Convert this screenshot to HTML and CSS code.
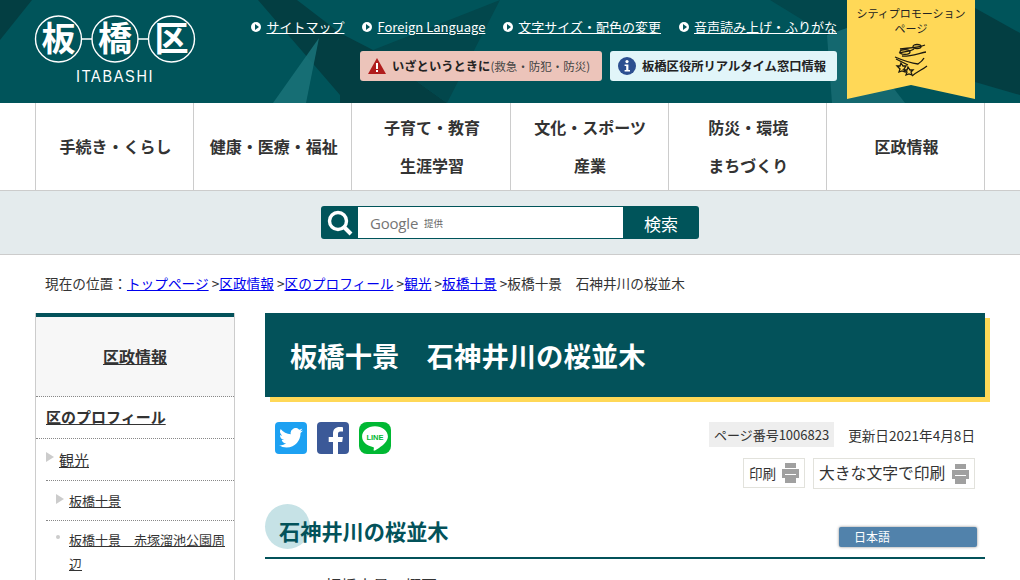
FILE: index.html
```html
<!DOCTYPE html>
<html lang="ja">
<head>
  <meta charset="UTF-8">
  <title>板橋十景 石神井川の桜並木</title>
  <link rel="stylesheet" href="styles.css">
</head>
<body>
  <!-- Header -->
  <header class="header">
    <svg class="header-bg" viewBox="0 0 1020 103" preserveAspectRatio="none" aria-hidden="true">
      <polygon points="0,0 32,0 0,40" fill="#033e42"/>
      <polygon points="258,0 297,0 340,33 373,50 447,103 340,103 340,95" fill="#033e42"/>
      <polygon points="373,50 500,0 447,103" fill="#02474c"/>
      <polygon points="319,38 306,103 273,103" fill="#1a7379" opacity="0.85"/>
      <polygon points="770,0 847,0 847,30 827,35" fill="#02474c"/>
      <polygon points="827,35 847,28 905,103 832,103" fill="#14686f"/>
      <polygon points="975,8 1020,33 1020,95 975,82" fill="#033e42"/>
    </svg>
    <a class="logo" href="#">
      <svg class="logo-marks" viewBox="0 0 160 48" aria-hidden="true">
        <circle cx="23.500" cy="24" r="23" fill="none" stroke="#fff" stroke-width="1.400"/>
        <circle cx="80" cy="24" r="23" fill="none" stroke="#fff" stroke-width="1.400"/>
        <circle cx="136.500" cy="24" r="23" fill="none" stroke="#fff" stroke-width="1.400"/>
        <path d="M46.500 24H57M103 24H113.500" stroke="#fff" stroke-width="1.400"/>
        <text x="23.500" y="36" class="logo-kanji">板</text>
        <text x="80" y="36" class="logo-kanji">橋</text>
        <text x="136.500" y="36" class="logo-kanji">区</text>
      </svg>
      <span class="logo-name">ITABASHI</span>
    </a>
    <div class="header-tools">
      <ul class="tool-links">
        <li><a href="#">サイトマップ</a></li>
        <li><a href="#">Foreign Language</a></li>
        <li><a href="#">文字サイズ・配色の変更</a></li>
        <li><a href="#">音声読み上げ・ふりがな</a></li>
      </ul>
      <div class="tool-buttons">
        <a class="btn-emergency" href="#">
          <svg width="18" height="16" viewBox="0 0 18 16" aria-hidden="true">
            <polygon points="9,0 18,16 0,16" fill="#b01c1c"/>
            <rect x="8" y="5" width="2" height="6" fill="#fff"/>
            <rect x="8" y="12" width="2" height="2" fill="#fff"/>
          </svg>
          <b>いざというときに</b><small>(救急・防犯・防災)</small>
        </a>
        <a class="btn-info" href="#">
          <svg width="18" height="18" viewBox="0 0 18 18" aria-hidden="true">
            <circle cx="9" cy="9" r="9" fill="#2c4f90"/>
            <circle cx="9" cy="4.600" r="1.600" fill="#fff"/>
            <path d="M6.600 7.400H10.400V13H12V14.600H6.600V13H8.200V9H6.600Z" fill="#fff"/>
          </svg>
          <b>板橋区役所リアルタイム窓口情報</b>
        </a>
      </div>
    </div>
    <a class="promo" href="#">
      <span>シティプロモーション<br>ページ</span>
      <svg width="34" height="34" viewBox="0 0 34 34" fill="none" stroke="#1d1a10" stroke-width="1.300" aria-hidden="true">
        <path d="M6 6C12 5 24 5 31 2M5 10C10 8 16 9 20 6M8 13C14 14 26 10 32 9"/>
        <ellipse cx="11" cy="9" rx="5" ry="2.400"/>
        <ellipse cx="23" cy="3.500" rx="4" ry="2"/>
        <path d="M1 14C8 17 16 20 24 21C27 19 29 17 30 15M18 33C24 28 28 27 33 23M2 16L14 22"/>
        <polygon points="7,20 9,23 12,23 10,26 11,29 8,28 5,29 6,26 3,23 6,23"/>
        <polygon points="14,24 16,27 19,27 17,29 18,32 15,31 12,32 13,29 10,27 13,27"/>
      </svg>
    </a>
  </header>

  <!-- Global nav -->
  <nav class="gnav">
    <a href="#">手続き・くらし</a>
    <a href="#">健康・医療・福祉</a>
    <a href="#">子育て・教育<br>生涯学習</a>
    <a href="#">文化・スポーツ<br>産業</a>
    <a href="#">防災・環境<br>まちづくり</a>
    <a href="#">区政情報</a>
  </nav>

  <!-- Search -->
  <div class="search-band">
    <form class="search">
      <span class="search-icon">
        <svg width="26" height="26" viewBox="0 0 26 26" fill="none" stroke="#fff" aria-hidden="true">
          <circle cx="11" cy="11" r="8.500" stroke-width="3.400"/>
          <path d="M17 17L24 24" stroke-width="4"/>
        </svg>
      </span>
      <span class="search-input"><span class="g-word">Google</span><span class="g-note">提供</span></span>
      <button type="button">検索</button>
    </form>
  </div>

  <!-- Breadcrumb -->
  <p class="crumbs">現在の位置：<a href="#">トップページ</a> &gt;<a href="#">区政情報</a> &gt;<a href="#">区のプロフィール</a> &gt;<a href="#">観光</a> &gt;<a href="#">板橋十景</a> &gt;板橋十景　石神井川の桜並木</p>

  <div class="wrap">
    <!-- Side menu -->
    <aside class="side">
      <h2 class="side-title"><a href="#">区政情報</a></h2>
      <h3 class="side-sub"><a href="#">区のプロフィール</a></h3>
      <ul class="side-list">
        <li class="lv1"><a href="#">観光</a></li>
        <li class="lv2"><a href="#">板橋十景</a></li>
        <li class="lv3"><a href="#">板橋十景　赤塚溜池公園周辺</a></li>
      </ul>
    </aside>

    <main class="main">
      <h1 class="page-title">板橋十景　石神井川の桜並木</h1>

      <div class="meta">
        <div class="sns">
          <a class="sns-btn tw" href="#">
            <svg width="24" height="20" viewBox="0 0 24 20" aria-hidden="true">
              <path d="M24 2.400a9.700 9.700 0 0 1-2.800.8A4.900 4.900 0 0 0 23.300.5a9.800 9.800 0 0 1-3.100 1.200A4.900 4.900 0 0 0 11.800 6.200 13.900 13.900 0 0 1 1.700.9a4.900 4.900 0 0 0 1.500 6.600A4.900 4.900 0 0 1 1 6.900v.1a4.900 4.900 0 0 0 3.900 4.800 4.900 4.900 0 0 1-2.200.1 4.900 4.900 0 0 0 4.600 3.400A9.900 9.900 0 0 1 0 17.300 13.900 13.900 0 0 0 7.500 19.500c9.100 0 14-7.500 14-14v-.6A10 10 0 0 0 24 2.400Z" fill="#fff"/>
            </svg>
          </a>
          <a class="sns-btn fb" href="#">
            <svg width="32" height="32" viewBox="0 0 32 32" aria-hidden="true">
              <path d="M21 32V20h4.200l.7-5H21v-3c0-1.500.6-2.400 2.500-2.400H26V5.200C25.400 5.100 24 5 22.500 5 18.600 5 16 7.300 16 11.500V15h-4.300v5H16v12Z" fill="#fff"/>
            </svg>
          </a>
          <a class="sns-btn ln" href="#">
            <svg width="28" height="28" viewBox="0 0 26 26" aria-hidden="true">
              <path d="M13 2C6.400 2 1 6.300 1 11.700c0 4.800 4.200 8.800 9.900 9.600.4.100.9.300 1 .6.100.3.100.8 0 1.100l-.2 1c0 .3-.2 1.200 1.100.7 1.300-.5 6.900-4.100 9.400-7 1.700-1.900 2.800-3.800 2.800-6C25 6.300 19.600 2 13 2Z" fill="#fff"/>
              <text x="13" y="14.500" class="line-word">LINE</text>
            </svg>
          </a>
        </div>
        <div class="page-info">
          <div class="page-ids">
            <span class="page-no">ページ番号1006823</span>
            <span class="page-date">更新日2021年4月8日</span>
          </div>
          <div class="print-btns">
            <a class="print small" href="#">印刷
              <svg width="17" height="20" viewBox="0 0 17 20" aria-hidden="true">
                <path d="M3 0H14V5H3ZM0 6H17V15H14V11H3V15H0ZM3 12H14V20H3Z" fill="#a0a0a0"/>
              </svg>
            </a>
            <a class="print large" href="#">大きな文字で印刷
              <svg width="17" height="20" viewBox="0 0 17 20" aria-hidden="true">
                <path d="M3 0H14V5H3ZM0 6H17V15H14V11H3V15H0ZM3 12H14V20H3Z" fill="#a0a0a0"/>
              </svg>
            </a>
          </div>
        </div>
      </div>

      <div class="section-head">
        <h2 class="section-title">石神井川の桜並木</h2>
        <span class="lang-box">日本語</span>
      </div>
      <p class="body-text">板橋十景の概要</p>
    </main>
  </div>
</body>
</html>
```

FILE: styles.css
```css
/* General */
html, body {
  height: 580px;
  overflow: hidden;
}

body {
  margin: 0;
  font-family: "Noto Sans CJK JP", "Noto Sans", sans-serif;
  color: #333;
  background: #fff;
}

ul {
  list-style: none;
  margin: 0;
  padding: 0;
}

/* Header */
.header {
  position: relative;
  height: 103px;
  background: #00545a;
  display: flex;
  padding-left: 35px;
  box-sizing: border-box;
}

.header-bg {
  position: absolute;
  left: 0;
  top: 0;
  width: 100%;
  height: 100%;
}

.logo {
  position: relative;
  width: 160px;
  padding-top: 15px;
  display: block;
  text-align: center;
  color: #fff;
  text-decoration: none;
}

.logo-marks {
  display: block;
  width: 160px;
  height: 48px;
  overflow: visible;
}

.logo-kanji {
  font-size: 34px;
  font-family: "Noto Sans CJK JP", sans-serif;
  font-weight: 700;
  fill: #fff;
  text-anchor: middle;
}

.logo-name {
  display: inline-block;
  margin-top: 4px;
  font-family: "Liberation Sans", sans-serif;
  font-size: 17px;
  line-height: 18px;
  letter-spacing: 2px;
  transform: scaleX(0.85);
}

.header-tools {
  position: relative;
  flex: 1;
  display: flex;
  flex-direction: column;
  align-items: flex-end;
  padding-right: 10px;
}

.tool-links {
  display: flex;
  gap: 18px;
  margin-top: 17px;
  height: 20px;
  font-size: 13px;
  line-height: 20px;
}

.tool-links li {
  position: relative;
  padding-left: 15px;
}

.tool-links li::before {
  content: "";
  position: absolute;
  left: 0;
  top: 5px;
  width: 10px;
  height: 10px;
  border-radius: 50%;
  background: #fff;
}

.tool-links li::after {
  content: "";
  position: absolute;
  left: 4px;
  top: 7px;
  border-left: 4px solid #00545a;
  border-top: 3px solid transparent;
  border-bottom: 3px solid transparent;
}

.tool-links a {
  color: #fff;
}

.tool-buttons {
  display: flex;
  gap: 8px;
  margin-top: 14px;
}

.btn-emergency, .btn-info {
  height: 30px;
  display: flex;
  align-items: center;
  border-radius: 3px;
  color: #222;
  text-decoration: none;
  font-size: 12.300px;
}

.btn-emergency {
  width: 242px;
  box-sizing: border-box;
  padding-left: 8px;
  background: #ecc4ba;
}

.btn-emergency svg {
  margin-right: 6px;
}

.btn-emergency small {
  font-size: 11.500px;
  color: #444;
}

.btn-info {
  width: 227px;
  box-sizing: border-box;
  padding-left: 8px;
  background: #e1f5f9;
}

.btn-info svg {
  margin-right: 6px;
}

.promo {
  position: relative;
  width: 128px;
  height: 99px;
  margin-right: 45px;
  box-sizing: border-box;
  padding-top: 6px;
  background: #ffd857;
  clip-path: polygon(0 0, 100% 0, 100% 100%, 50% 85px, 0 100%);
  color: #222;
  text-align: center;
  text-decoration: none;
  font-size: 11px;
  line-height: 15px;
}

.promo svg {
  display: block;
  margin: 7px auto 0;
}

/* Global nav */
.gnav {
  height: 87px;
  display: flex;
  padding: 0 35px;
  border-bottom: 1px solid #ccc;
}

.gnav a {
  flex: 1;
  display: flex;
  align-items: center;
  justify-content: center;
  box-sizing: border-box;
  padding: 0 0 2px 2px;
  text-align: center;
  border-left: 1px solid #ccc;
  color: #333;
  font-size: 16px;
  font-weight: 700;
  line-height: 38px;
  text-decoration: none;
}

.gnav a:last-child {
  border-right: 1px solid #ccc;
}

/* Search */
.search-band {
  height: 48px;
  background: #e4ebed;
  border-bottom: 1px solid #ccc;
  display: flex;
  justify-content: center;
  padding-top: 15px;
}

.search {
  width: 378px;
  height: 33px;
  display: flex;
  background: #00545a;
  border-radius: 3px;
}

.search-icon {
  width: 37px;
  display: flex;
  align-items: center;
  justify-content: center;
}

.search-input {
  width: 265px;
  height: 31px;
  margin-top: 1px;
  background: #fff;
  display: flex;
  align-items: center;
  padding-left: 12px;
  box-sizing: border-box;
  color: #757575;
}

.g-word {
  font-family: "Open Sans", sans-serif;
  font-size: 15px;
  letter-spacing: -0.2px;
  margin-right: 6px;
}

.g-note {
  font-size: 9.500px;
  color: #666;
}

.search button {
  flex: 1;
  border: 0;
  padding: 2px 0 0;
  background: none;
  color: #fff;
  font-family: inherit;
  font-size: 17px;
}

/* Breadcrumb */
.crumbs {
  margin: 17px 0 0;
  padding-left: 45px;
  height: 30px;
  font-size: 13.670px;
  line-height: 22px;
}

.crumbs a {
  color: #00e;
}

/* Two columns */
.wrap {
  display: flex;
  gap: 30px;
  padding: 11px 35px 0;
}

/* Side menu */
.side {
  width: 200px;
  flex: none;
  box-sizing: border-box;
  border: 1px solid #ccc;
  border-top: 0;
  font-size: 14px;
}

.side a {
  color: #333;
}

.side-title {
  margin: 0;
  height: 79px;
  box-sizing: content-box;
  border-top: 4px solid #03525a;
  background: #f7f7f7;
  border-bottom: 1px dotted #888;
  display: flex;
  align-items: center;
  justify-content: center;
  font-size: 16px;
  font-weight: 700;
}

.side-title a {
  margin-bottom: 2px;
}

.side-sub {
  margin: 0;
  height: 41px;
  padding-left: 10px;
  border-bottom: 1px dotted #888;
  font-size: 15px;
  line-height: 39px;
}

.side-list li {
  position: relative;
  border-bottom: 1px dotted #888;
  line-height: 26px;
}

.side-list .lv1 {
  margin-left: 10px;
  padding: 8px 0 7px 13px;
  font-size: 15px;
}

.side-list .lv2 {
  margin-left: 10px;
  padding: 7px 0 6px 23px;
  font-size: 13px;
}

.side-list .lv3 {
  margin-left: 10px;
  padding: 7px 0 0 23px;
  font-size: 13px;
  line-height: 24px;
  border-bottom: 0;
}

.side-list .lv1::before, .side-list .lv2::before {
  content: "";
  position: absolute;
  top: 13px;
  border-left: 8px solid #ccc;
  border-top: 5px solid transparent;
  border-bottom: 5px solid transparent;
}

.side-list .lv1::before {
  left: 0;
}

.side-list .lv2::before {
  left: 10px;
}

.side-list .lv3::before {
  content: "";
  position: absolute;
  left: 10px;
  top: 14px;
  width: 4px;
  height: 4px;
  border-radius: 50%;
  background: #ccc;
}

/* Main column */
.main {
  flex: 1;
  min-width: 0;
}

.page-title {
  margin: 0;
  height: 84px;
  width: 720px;
  box-sizing: border-box;
  background: #03525a;
  box-shadow: 5px 5px 0 #ffd857;
  color: #fff;
  font-size: 27.350px;
  line-height: 84px;
  padding-left: 25px;
  font-weight: 700;
  overflow: hidden;
}

.meta {
  display: flex;
  justify-content: space-between;
  padding: 25px 10px 0;
  height: 82px;
}

.sns {
  display: flex;
  gap: 10px;
}

.sns-btn {
  width: 32px;
  height: 32px;
  border-radius: 4px;
  display: flex;
  align-items: center;
  justify-content: center;
  overflow: hidden;
}

.sns-btn.tw {
  background: #1da1f2;
}

.sns-btn.fb {
  background: #3b5998;
}

.sns-btn.ln {
  background: #00b833;
  border-radius: 8px;
}

.line-word {
  font-family: "Liberation Sans", sans-serif;
  font-size: 7px;
  font-weight: 700;
  fill: #00b833;
  text-anchor: middle;
}

.page-info {
  display: flex;
  flex-direction: column;
  align-items: flex-end;
  font-size: 13.600px;
}

.page-ids {
  display: flex;
  align-items: center;
  gap: 14px;
}

.page-no {
  background: #eee;
  padding: 0 5px;
  font-size: 13px;
  line-height: 25px;
}

.print-btns {
  display: flex;
  gap: 8px;
  margin-top: 11px;
}

.print {
  display: flex;
  align-items: center;
  justify-content: space-between;
  box-sizing: border-box;
  border: 1px solid #e2e2dc;
  color: #333;
  text-decoration: none;
  padding: 0 5px;
  white-space: nowrap;
}

.print.small {
  width: 62px;
  height: 30px;
  font-size: 13.600px;
}

.print.large {
  width: 162px;
  height: 31px;
  padding-bottom: 2px;
  font-size: 15.800px;
}

.print.large svg {
  margin-top: 2px;
}

/* Section heading */
.section-head {
  position: relative;
  height: 53px;
  border-bottom: 2px solid #03525a;
  width: 720px;
}

.section-title {
  margin: 0;
  padding: 10px 0 0 14px;
  font-size: 21.200px;
  line-height: 34px;
  color: #03525a;
  position: relative;
}

.section-title::before {
  content: "";
  position: absolute;
  left: 0;
  top: 0;
  width: 45px;
  height: 45px;
  border-radius: 50%;
  background: #c6e2e6;
  z-index: -1;
}

.lang-box {
  position: absolute;
  right: 8px;
  top: 23px;
  width: 138px;
  height: 20px;
  box-sizing: border-box;
  padding-left: 15px;
  background: #5182ab;
  border-radius: 2px;
  box-shadow: 0 0 3px #888;
  color: #fff;
  font-size: 12px;
  line-height: 20px;
}

.body-text {
  margin: 14px 0 0;
  padding-left: 60px;
  font-size: 16px;
}
```
